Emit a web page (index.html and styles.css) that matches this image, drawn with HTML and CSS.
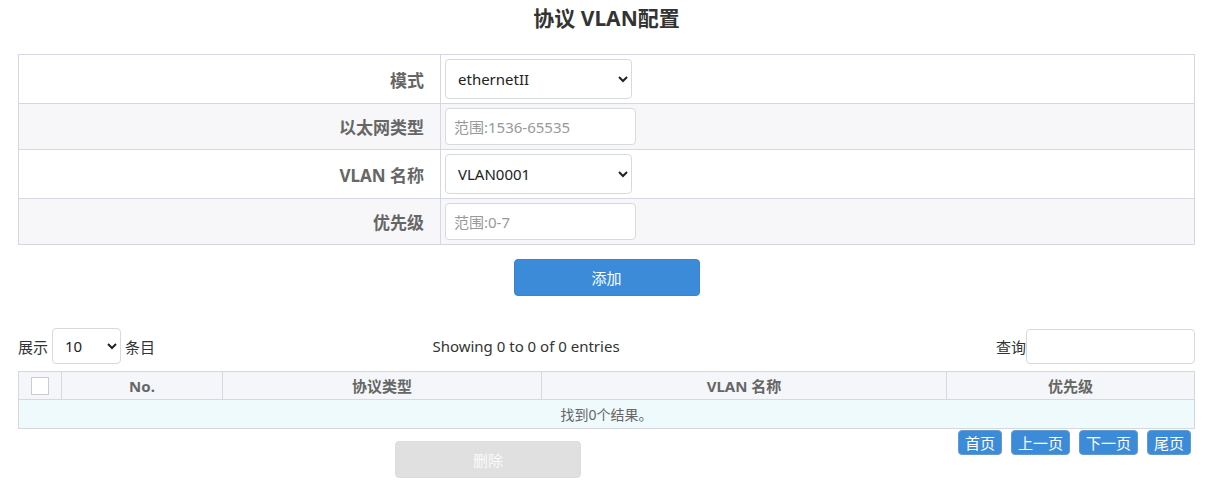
FILE: index.html
```html
<!DOCTYPE html>
<html lang="zh-CN">
<head>
    <meta charset="UTF-8">
    <title>协议 VLAN配置</title>
    <link rel="stylesheet" href="styles.css">
</head>
<body>
    <div class="page">
        <h2 class="title">协议 VLAN配置</h2>

        <!-- Config form -->
        <table class="config">
            <tr>
                <th>模式</th>
                <td>
                    <select class="ctl ctl-select">
                        <option>ethernetII</option>
                        <option>snap</option>
                        <option>llc</option>
                    </select>
                </td>
            </tr>
            <tr class="alt">
                <th>以太网类型</th>
                <td><input class="ctl ctl-input" type="text" placeholder="范围:1536-65535"></td>
            </tr>
            <tr>
                <th>VLAN 名称</th>
                <td>
                    <select class="ctl ctl-select">
                        <option>VLAN0001</option>
                    </select>
                </td>
            </tr>
            <tr class="alt">
                <th>优先级</th>
                <td><input class="ctl ctl-input" type="text" placeholder="范围:0-7"></td>
            </tr>
        </table>

        <div class="actions">
            <button class="btn btn-primary">添加</button>
        </div>

        <!-- List toolbar -->
        <div class="toolbar">
            <div class="length">
                展示
                <select class="len-select">
                    <option>10</option>
                    <option>25</option>
                    <option>50</option>
                </select>
                条目
            </div>
            <div class="info">Showing 0 to 0 of 0 entries</div>
            <div class="search">
                查询<input class="search-input" type="text">
            </div>
        </div>

        <table class="list">
            <thead>
                <tr>
                    <th class="col-check"><span class="checkbox"></span></th>
                    <th class="col-no">No.</th>
                    <th class="col-type">协议类型</th>
                    <th class="col-vlan">VLAN 名称</th>
                    <th>优先级</th>
                </tr>
            </thead>
            <tbody>
                <tr class="empty">
                    <td colspan="5">找到0个结果。</td>
                </tr>
            </tbody>
        </table>

        <div class="footer">
            <div class="footer-main">
                <button class="btn btn-disabled">删除</button>
            </div>
            <div class="pager">
                <button class="page-btn">首页</button>
                <button class="page-btn">上一页</button>
                <button class="page-btn">下一页</button>
                <button class="page-btn">尾页</button>
            </div>
        </div>
    </div>
</body>
</html>
```

FILE: styles.css
```css
body {
    margin: 0;
    font-family: "Noto Sans", "Noto Sans CJK SC", sans-serif;
    color: #333;
    background-color: #fff;
}
.page {
    padding: 0 20px 0 18px;
}
.title {
    margin: 0;
    padding: 2px 0 0;
    height: 54px;
    box-sizing: border-box;
    text-align: center;
    font-size: 21px;
    font-weight: bold;
    color: #333;
}

/* Config table */
.config {
    width: 100%;
    border-collapse: collapse;
    border: 1px solid #d5d8e0;
}
.config tr + tr {
    border-top: 1px solid #d5d8e0;
}
.config tr.alt {
    background-color: #f7f7f9;
}
.config th {
    width: 405px;
    padding: 0 16px 0 0;
    text-align: right;
    font-size: 17px;
    font-weight: bold;
    color: #666;
    border-right: 1px solid #d5d8e0;
}
.config td {
    padding: 4px 4px;
    line-height: 0;
}
.ctl {
    box-sizing: border-box;
    font-family: inherit;
    font-size: 15px;
    color: #222;
    background-color: #fff;
    border: 1px solid #d6d9de;
    border-radius: 4px;
    vertical-align: middle;
}
.ctl-select {
    width: 187px;
    height: 40px;
    padding: 0 8px;
}
.ctl-input {
    width: 191px;
    height: 37px;
    padding: 0 8px;
}
.ctl-input::placeholder {
    color: #999;
}

/* Buttons */
.actions {
    text-align: center;
    padding: 14px 0 0 0;
    height: 71px;
    box-sizing: border-box;
}
.btn {
    width: 186px;
    height: 37px;
    border-radius: 4px;
    font-family: inherit;
    font-size: 15px;
    color: #fff;
    cursor: pointer;
}
.btn-primary {
    background-color: #3c8bd8;
    border: 1px solid #3a84cc;
}
.btn-disabled {
    background-color: #e0e0e0;
    border: 1px solid #dcdcdc;
    color: #fafafa;
    cursor: default;
}

/* Toolbar */
.toolbar {
    display: flex;
    align-items: center;
    justify-content: space-between;
    height: 36px;
    margin: 12px 0 7px;
    font-size: 15px;
    color: #333;
}
.length {
    width: 300px;
    display: flex;
    align-items: center;
}
.len-select {
    box-sizing: border-box;
    width: 69px;
    height: 36px;
    margin: 0 4px 0 4px;
    padding: 0 8px;
    font-family: inherit;
    font-size: 15px;
    color: #222;
    background-color: #fff;
    border: 1px solid #d6d9de;
    border-radius: 4px;
}
.info {
    flex: 1;
    text-align: center;
    padding-right: 262px;
}
.search {
    display: flex;
    align-items: center;
}
.search-input {
    box-sizing: border-box;
    width: 169px;
    height: 35px;
    border: 1px solid #d6d9de;
    border-radius: 4px;
}

/* List table */
.list {
    width: 100%;
    border-collapse: collapse;
    border: 1px solid #d5d8e0;
}
.list th {
    height: 27px;
    padding: 0;
    background-color: #f5f6fa;
    font-size: 15px;
    font-weight: bold;
    color: #666;
    border-right: 1px solid #d5d8e0;
    border-bottom: 1px solid #d5d8e0;
}
.col-check {
    width: 42px;
}
.col-no {
    width: 160px;
}
.col-type {
    width: 318px;
}
.col-vlan {
    width: 404px;
}
.checkbox {
    display: block;
    width: 16px;
    height: 16px;
    margin: 0 auto;
    background-color: #fff;
    border: 1px solid #ccc;
}
.list td {
    height: 28px;
    padding: 0;
    text-align: center;
    font-size: 14px;
    color: #666;
}
.list tr.empty {
    background-color: #effafd;
}

/* Footer */
.footer {
    display: flex;
    align-items: flex-start;
}
.footer-main {
    flex: 1;
    text-align: center;
    padding-top: 12px;
}
.pager {
    display: flex;
    gap: 9px;
    padding: 1px 4px 0 0;
}
.page-btn {
    height: 25px;
    padding: 0 6px;
    font-family: inherit;
    font-size: 15px;
    color: #fff;
    background-color: #3c8bd8;
    border: 1px solid #6699cc;
    border-radius: 4px;
    cursor: pointer;
}
```
